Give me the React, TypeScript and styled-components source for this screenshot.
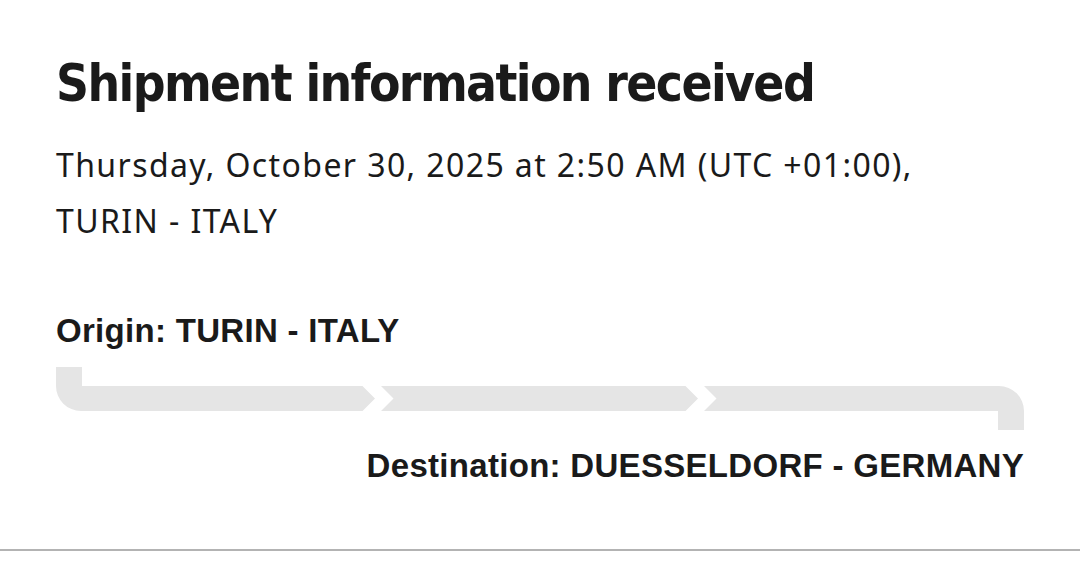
import styled, { createGlobalStyle } from "styled-components";

const GlobalStyle = createGlobalStyle`
  html, body {
    margin: 0;
    padding: 0;
    background: #ffffff;
  }
`;

const Page = styled.div`
  width: 1080px;
  height: 566px;
  box-sizing: border-box;
  display: flex;
  flex-direction: column;
  background: #ffffff;
  color: #1a1a1a;
`;

const Content = styled.div`
  flex: 1;
  padding: 52px 56px 0 56px;
  display: flex;
  flex-direction: column;
`;

const Title = styled.h1`
  margin: 0;
  font-family: "DejaVu Sans Condensed", "DejaVu Sans", sans-serif;
  font-weight: 700;
  font-size: 51px;
  line-height: 64px;
  letter-spacing: -1.6px;
  color: #1a1a1a;
`;

const Timestamp = styled.p`
  margin: 21px 0 0 0;
  font-family: "Noto Sans", "Liberation Sans", sans-serif;
  font-size: 32px;
  line-height: 56px;
  letter-spacing: 1.4px;
  color: #1a1a1a;
`;

const Route = styled.div`
  margin-top: 62px;
  display: flex;
  flex-direction: column;
`;

const Place = styled.div<{ $align?: "left" | "right" }>`
  font-family: "Liberation Sans", Arial, sans-serif;
  font-weight: 700;
  font-size: 33px;
  line-height: 40px;
  letter-spacing: 0.3px;
  text-align: ${(p) => p.$align ?? "left"};
  color: #1a1a1a;
`;

const Track = styled.svg`
  display: block;
  margin: 16px 0 15px 0;
`;

const Divider = styled.div`
  height: 2px;
  background: #b3b3b3;
  margin-bottom: 15px;
`;

const TrackBar = () => (
  <Track width="968" height="64" viewBox="0 0 968 64">
    <g fill="#e5e5e5">
      <path d="M0 0 H26 V19 H306.5 L319 31.5 L306.5 44 H25 A25 25 0 0 1 0 19 Z" />
      <path d="M325 19 H629.5 L642 31.5 L629.5 44 H325 L337.5 31.5 Z" />
      <path d="M648 19 H943 A25 25 0 0 1 968 44 V63 H942 V44 H648 L660.5 31.5 Z" />
    </g>
  </Track>
);

export default function App() {
  return (
    <Page>
      <GlobalStyle />
      <Content>
        <Title>Shipment information received</Title>
        <Timestamp>
          Thursday, October 30, 2025 at 2:50 AM (UTC +01:00),
          <br />
          TURIN - ITALY
        </Timestamp>
        <Route>
          <Place>Origin: TURIN - ITALY</Place>
          <TrackBar />
          <Place $align="right">Destination: DUESSELDORF - GERMANY</Place>
        </Route>
      </Content>
      <Divider />
    </Page>
  );
}
